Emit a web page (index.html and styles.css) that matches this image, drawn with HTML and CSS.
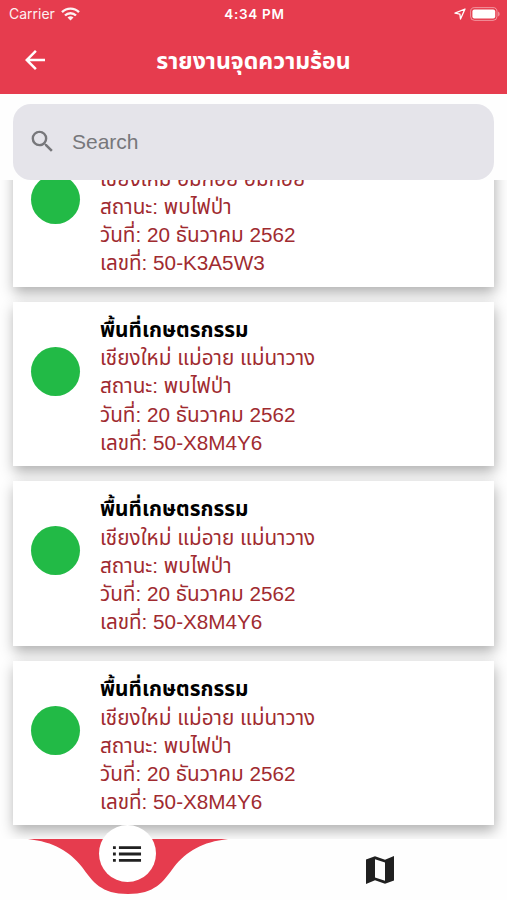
FILE: index.html
```html
<!DOCTYPE html>
<html lang="th">
<head>
  <meta charset="UTF-8" />
  <meta name="viewport" content="width=device-width, initial-scale=1.0" />
  <title>รายงานจุดความร้อน</title>
  <link rel="stylesheet" href="styles.css">
</head>
<body>
  <header>
    <div class="status-bar">
      <div class="carrier">
        <span>Carrier</span>
        <svg width="19" height="14" viewBox="0 0 19 14" fill="none" stroke="#fff" stroke-width="2.4">
          <path d="M1 5.2a12 12 0 0 1 17 0" />
          <path d="M4 8.5a7.8 7.8 0 0 1 11 0" />
          <path d="M9.5 13.6L6.5 10.6a4.3 4.3 0 0 1 6 0z" fill="#fff" stroke="none" />
        </svg>
      </div>
      <div class="time">4:34 PM</div>
      <div class="battery">
        <svg width="12" height="12" viewBox="0 0 12 12" fill="none" stroke="#fff" stroke-width="1.3" stroke-linejoin="round">
          <path d="M11 1L1 5.2l4.9.9L6.5 11z" />
        </svg>
        <svg width="30" height="14" viewBox="0 0 30 14">
          <rect x=".6" y=".6" width="26.4" height="12.8" rx="4" fill="none" stroke="#fff" stroke-opacity=".45" />
          <rect x="2.4" y="2.4" width="22.8" height="9.2" rx="2" fill="#fff" />
          <path d="M28.2 4.6q1.4.8 1.4 2.4t-1.4 2.4z" fill="#fff" fill-opacity=".5" />
        </svg>
      </div>
    </div>
    <div class="title-bar">
      <svg class="back" width="30" height="30" viewBox="0 0 24 24" fill="#fff">
        <path d="M20 11H7.83l5.59-5.59L12 4l-8 8 8 8 1.41-1.41L7.83 13H20v-2z" />
      </svg>
      <h1>รายงานจุดความร้อน</h1>
    </div>
  </header>

  <div class="search">
    <svg width="29" height="29" viewBox="0 0 24 24" fill="#77777b">
      <path d="M15.5 14h-.79l-.28-.27A6.47 6.47 0 0 0 16 9.5 6.5 6.5 0 1 0 9.5 16c1.61 0 3.09-.59 4.23-1.57l.27.28v.79l5 4.99L20.49 19l-4.99-5zm-6 0C7.01 14 5 11.99 5 9.5S7.01 5 9.5 5 14 7.01 14 9.5 11.99 14 9.5 14z" />
    </svg>
    <span>Search</span>
  </div>

  <main class="list" id="reportList"></main>

  <nav class="tabs">
    <svg class="wave" width="200" height="56" viewBox="0 0 200 56" fill="#e63c4e">
      <path d="M0 0H200C174 3 159 12 146 28C135 43 127 55 100 55S65 43 54 28C41 12 26 3 0 0z" />
    </svg>
    <div class="tab active">
      <svg width="34" height="34" viewBox="0 0 24 24" fill="#202020">
        <path d="M2.1 6.5h2v2h-2zM2.1 11h2v2h-2zM2.1 15.5h2v2h-2zM6.3 6.5h15.6v2H6.3zM6.3 11h15.6v2H6.3zM6.3 15.5h15.6v2H6.3z" />
      </svg>
    </div>
    <div class="tab map">
      <svg width="28" height="28" viewBox="0 0 28 28" fill="#202020">
        <path d="M0 3.4L9 .2l10 3.5L28 0v24.6l-9 3.2-10-3.6L0 28zM9 3.3V21.4l10 3.4V6.6z" fill-rule="evenodd" />
      </svg>
    </div>
  </nav>

  <script>
    const reports = [
      { place: "เชียงใหม่ อมก๋อย อมก๋อย", code: "50-K3A5W3" },
      { area: "พื้นที่เกษตรกรรม", place: "เชียงใหม่ แม่อาย แม่นาวาง", code: "50-X8M4Y6" },
      { area: "พื้นที่เกษตรกรรม", place: "เชียงใหม่ แม่อาย แม่นาวาง", code: "50-X8M4Y6" },
      { area: "พื้นที่เกษตรกรรม", place: "เชียงใหม่ แม่อาย แม่นาวาง", code: "50-X8M4Y6" },
    ];

    document.getElementById("reportList").innerHTML = reports.map(report => `
      <div class="card">
        <div class="dot"></div>
        <div class="info">
          ${report.area ? `<h3>${report.area}</h3>` : ""}
          <p class="place">${report.place}</p>
          <p class="status">สถานะ: พบไฟป่า</p>
          <p class="date">วันที่: 20 ธันวาคม 2562</p>
          <p class="code">เลขที่: ${report.code}</p>
        </div>
      </div>
    `).join("");
  </script>
</body>
</html>
```
FILE: styles.css
```css
* {
  margin: 0;
  padding: 0;
  box-sizing: border-box;
}

body {
  width: 507px;
  height: 900px;
  display: flex;
  flex-direction: column;
  overflow: hidden;
  background: #fefefe;
  font-family: "Liberation Sans", "Noto Sans Thai", sans-serif;
}

svg {
  display: block;
  flex: none;
}

header {
  height: 93.7px;
  background: #e63c4e;
  color: #fff;
}

.status-bar {
  display: grid;
  grid-template-columns: 1fr auto 1fr;
  align-items: center;
  height: 27px;
  padding: 0 7px 0 9px;
  font-family: Inter, sans-serif;
  font-size: 14px;
}

.carrier,
.battery {
  display: flex;
  align-items: center;
  gap: 6px;
}

.carrier {
  opacity: .93;
}

.time {
  font-size: 13.5px;
  font-weight: 600;
  letter-spacing: .7px;
}

.battery {
  justify-content: flex-end;
  gap: 4px;
}

.title-bar {
  display: grid;
  grid-template-columns: 60px 1fr 60px;
  align-items: center;
  height: 66px;
}

.back {
  margin-left: 20px;
}

h1 {
  padding-top: 3px;
  font-size: 23.1px;
  text-align: center;
  white-space: nowrap;
}

.search {
  display: flex;
  align-items: center;
  gap: 15px;
  height: 76.5px;
  margin: 10px 13px 0;
  padding-left: 15px;
  background: #e5e4ea;
  border-radius: 18px;
  color: #77777b;
  font-size: 21px;
}

.list {
  display: flex;
  flex-direction: column;
  justify-content: flex-end;
  gap: 15px;
  height: 658.8px;
  padding: 0 13px 13.5px;
  overflow: hidden;
}

.card {
  display: flex;
  flex: none;
  height: 164.6px;
  padding: 0 18px 9.6px;
  background: #fff;
  box-shadow: 1px 6px 13px rgba(0, 0, 0, .31);
}

.dot {
  width: 49px;
  height: 49px;
  margin: 45px 20px 0 0;
  background: #22ba46;
  border-radius: 50%;
}

.card:first-child .dot {
  margin-top: 53px;
}

.info {
  align-self: flex-end;
}

.info h3,
.info p {
  height: 28.1px;
  line-height: 28.1px;
  font-size: 20.7px;
  white-space: nowrap;
}

.info h3 {
  height: 28.6px;
  font-size: 20.8px;
}

.info p {
  color: #a02b30;
}

.tabs {
  position: relative;
  display: grid;
  grid-template-columns: 1fr 1fr;
  height: 61px;
}

.wave {
  position: absolute;
  left: 27.5px;
  top: 0;
}

.tab {
  display: flex;
  align-items: center;
  justify-content: center;
}

.tab.map {
  padding-top: 1px;
}

.tab.active {
  position: relative;
  top: -13.5px;
  left: .7px;
  justify-self: center;
  width: 57px;
  height: 57px;
  background: #fff;
  border-radius: 50%;
}
```
